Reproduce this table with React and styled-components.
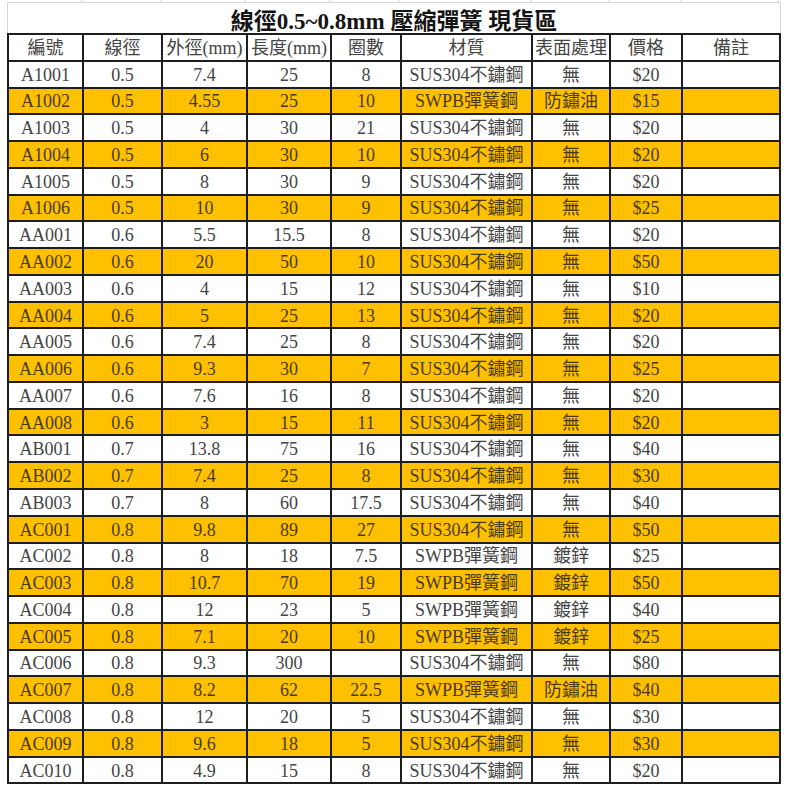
import React from 'react'
import styled, { createGlobalStyle } from 'styled-components'

const GlobalStyle = createGlobalStyle`
  body {
    margin: 0;
    background: #fff;
    font-family: "Liberation Serif", "Noto Sans CJK TC", serif;
  }
`

const widths = [75, 79, 85, 84, 70, 131, 78, 72, 98]
const cols = widths.map(w => w - 2 + 'px').join(' ')

const Page = styled.div`
  width: 787px;
  height: 787px;
  padding-left: 7px;
  box-sizing: border-box;
  overflow: hidden;
`

const GridStrip = styled.div`
  display: grid;
  grid-template-columns: ${cols};
  column-gap: 2px;
  padding: 0 2px;
  width: 774px;
  box-sizing: border-box;
  height: 3px;
  border-bottom: 1px solid #d6d6d6;
`

const StripCell = styled.div`
  border-right: 1px solid #dcdcdc;
`

const TitleRow = styled.div`
  width: 774px;
  height: 30px;
  box-sizing: border-box;
  border-left: 1px solid #d6d6d6;
  border-right: 1px solid #d6d6d6;
  display: flex;
  align-items: center;
  justify-content: center;
  padding-top: 2px;
  font-size: 23px;
  font-weight: bold;
  color: #141414;
`

const Table = styled.div`
  display: grid;
  grid-template-columns: ${cols};
  grid-auto-rows: 24.78px;
  gap: 2px;
  padding: 2px;
  width: 774px;
  box-sizing: border-box;
  background: #1e1e1e;
`

const Cell = styled.div`
  background: ${p => (p.$hi ? '#ffc000' : '#fff')};
  color: ${p => (p.$hi ? '#4a3c12' : '#444')};
  font-size: 18px;
  display: flex;
  align-items: center;
  justify-content: center;
  white-space: nowrap;
  overflow: hidden;
  line-height: 1;
  padding-top: 1px;
`

const headers = ['編號', '線徑', '外徑(mm)', '長度(mm)', '圈數', '材質', '表面處理', '價格', '備註']

const SUS = 'SUS304不鏽鋼'
const SW = 'SWPB彈簧鋼'

const rows = [
  ['A1001', '0.5', '7.4', '25', '8', SUS, '無', '$20'],
  ['A1002', '0.5', '4.55', '25', '10', SW, '防鏽油', '$15'],
  ['A1003', '0.5', '4', '30', '21', SUS, '無', '$20'],
  ['A1004', '0.5', '6', '30', '10', SUS, '無', '$20'],
  ['A1005', '0.5', '8', '30', '9', SUS, '無', '$20'],
  ['A1006', '0.5', '10', '30', '9', SUS, '無', '$25'],
  ['AA001', '0.6', '5.5', '15.5', '8', SUS, '無', '$20'],
  ['AA002', '0.6', '20', '50', '10', SUS, '無', '$50'],
  ['AA003', '0.6', '4', '15', '12', SUS, '無', '$10'],
  ['AA004', '0.6', '5', '25', '13', SUS, '無', '$20'],
  ['AA005', '0.6', '7.4', '25', '8', SUS, '無', '$20'],
  ['AA006', '0.6', '9.3', '30', '7', SUS, '無', '$25'],
  ['AA007', '0.6', '7.6', '16', '8', SUS, '無', '$20'],
  ['AA008', '0.6', '3', '15', '11', SUS, '無', '$20'],
  ['AB001', '0.7', '13.8', '75', '16', SUS, '無', '$40'],
  ['AB002', '0.7', '7.4', '25', '8', SUS, '無', '$30'],
  ['AB003', '0.7', '8', '60', '17.5', SUS, '無', '$40'],
  ['AC001', '0.8', '9.8', '89', '27', SUS, '無', '$50'],
  ['AC002', '0.8', '8', '18', '7.5', SW, '鍍鋅', '$25'],
  ['AC003', '0.8', '10.7', '70', '19', SW, '鍍鋅', '$50'],
  ['AC004', '0.8', '12', '23', '5', SW, '鍍鋅', '$40'],
  ['AC005', '0.8', '7.1', '20', '10', SW, '鍍鋅', '$25'],
  ['AC006', '0.8', '9.3', '300', '', SUS, '無', '$80'],
  ['AC007', '0.8', '8.2', '62', '22.5', SW, '防鏽油', '$40'],
  ['AC008', '0.8', '12', '20', '5', SUS, '無', '$30'],
  ['AC009', '0.8', '9.6', '18', '5', SUS, '無', '$30'],
  ['AC010', '0.8', '4.9', '15', '8', SUS, '無', '$20'],
]

function App() {
  return (
    <Page>
      <GlobalStyle />
      <GridStrip>
        {widths.map((w, i) => <StripCell key={i} />)}
      </GridStrip>
      <TitleRow>線徑0.5~0.8mm 壓縮彈簧 現貨區</TitleRow>
      <Table>
        {headers.map(h => <Cell key={h}>{h}</Cell>)}
        {rows.map((r, i) => {
          const hi = i % 2 === 1
          return [...r, ''].map((v, j) => (
            <Cell key={i + '-' + j} $hi={hi}>{v}</Cell>
          ))
        })}
      </Table>
    </Page>
  )
}

export default App
